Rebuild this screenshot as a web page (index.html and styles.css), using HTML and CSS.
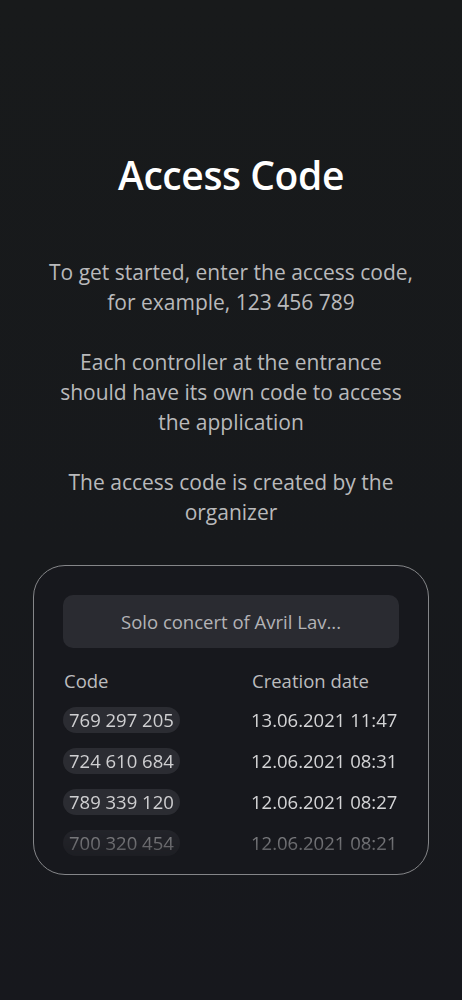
FILE: index.html
```html
<!DOCTYPE html>
<html lang="en">

<head>
  <meta charset="UTF-8">
  <meta name="viewport" content="width=device-width, initial-scale=1.0">
  <title>Access Code</title>
  <link rel="stylesheet" href="styles.css">
</head>

<body>
  <div class="screen">
    <h1 class="title">Access Code</h1>

    <div class="intro">
      <p>To get started, enter the access code, for example, 123 456 789</p>
      <p>Each controller at the entrance should have its own code to access the application</p>
      <p>The access code is created by the organizer</p>
    </div>

    <div class="card">
      <div class="event-select">Solo concert of Avril Lav...</div>

      <div class="codes">
        <div class="codes-head">
          <span>Code</span>
          <span>Creation date</span>
        </div>
        <div class="codes-list">
          <div class="code-row">
            <span class="code-pill">769 297 205</span>
            <span class="code-date">13.06.2021 11:47</span>
          </div>
          <div class="code-row">
            <span class="code-pill">724 610 684</span>
            <span class="code-date">12.06.2021 08:31</span>
          </div>
          <div class="code-row">
            <span class="code-pill">789 339 120</span>
            <span class="code-date">12.06.2021 08:27</span>
          </div>
          <div class="code-row">
            <span class="code-pill">700 320 454</span>
            <span class="code-date">12.06.2021 08:21</span>
          </div>
        </div>
      </div>
    </div>
  </div>
</body>

</html>
```

FILE: styles.css
```css
html,
body {
  margin: 0;
  padding: 0;
}

body {
  font-family: "Open Sans", "Noto Sans", sans-serif;
  background: linear-gradient(to bottom, #181a1b 0%, #17191c 55%, #17181d 100%);
  color: #b9b9bb;
  min-height: 1000px;
}

.screen {
  display: flex;
  flex-direction: column;
  align-items: center;
  padding: 150px 33px 0;
}

.title {
  margin: 0;
  font-size: 39px;
  font-weight: 600;
  line-height: 50px;
  color: #ffffff;
  letter-spacing: -0.4px;
}

.intro {
  box-sizing: border-box;
  width: 100%;
  margin-top: 57px;
  text-align: center;
  font-size: 21px;
  line-height: 30px;
  padding: 0 14px;
}

.intro p {
  margin: 0 0 30px;
}

.intro p:last-child {
  margin-bottom: 0;
}

.card {
  box-sizing: border-box;
  width: 396px;
  margin-top: 38px;
  padding: 29px 29px 11px;
  border: 1.5px solid #858689;
  border-radius: 32px;
  background-color: #17181d;
}

.event-select {
  height: 53px;
  display: flex;
  align-items: center;
  justify-content: center;
  background-color: #2a2b31;
  border-radius: 10px;
  font-size: 18.5px;
  color: #b3b3b6;
}

.codes {
  margin-top: 17px;
  font-size: 18.5px;
}

.codes-head,
.code-row {
  display: grid;
  grid-template-columns: 188px 1fr;
  align-items: center;
}

.codes-head {
  height: 30px;
  color: #bcbcbe;
  padding-left: 1px;
}

.codes-list {
  margin-top: 4px;
  -webkit-mask-image: linear-gradient(to bottom, #000 74%, rgba(0, 0, 0, 0.6) 80%, rgba(0, 0, 0, 0.25) 100%);
  mask-image: linear-gradient(to bottom, #000 74%, rgba(0, 0, 0, 0.6) 80%, rgba(0, 0, 0, 0.25) 100%);
}

.code-row {
  height: 41px;
}

.code-pill {
  justify-self: start;
  padding: 0 6px;
  line-height: 26px;
  border-radius: 13px;
  background-color: #2b2c32;
  color: #cfcfd1;
}

.code-date {
  color: #d4d4d6;
}
```
